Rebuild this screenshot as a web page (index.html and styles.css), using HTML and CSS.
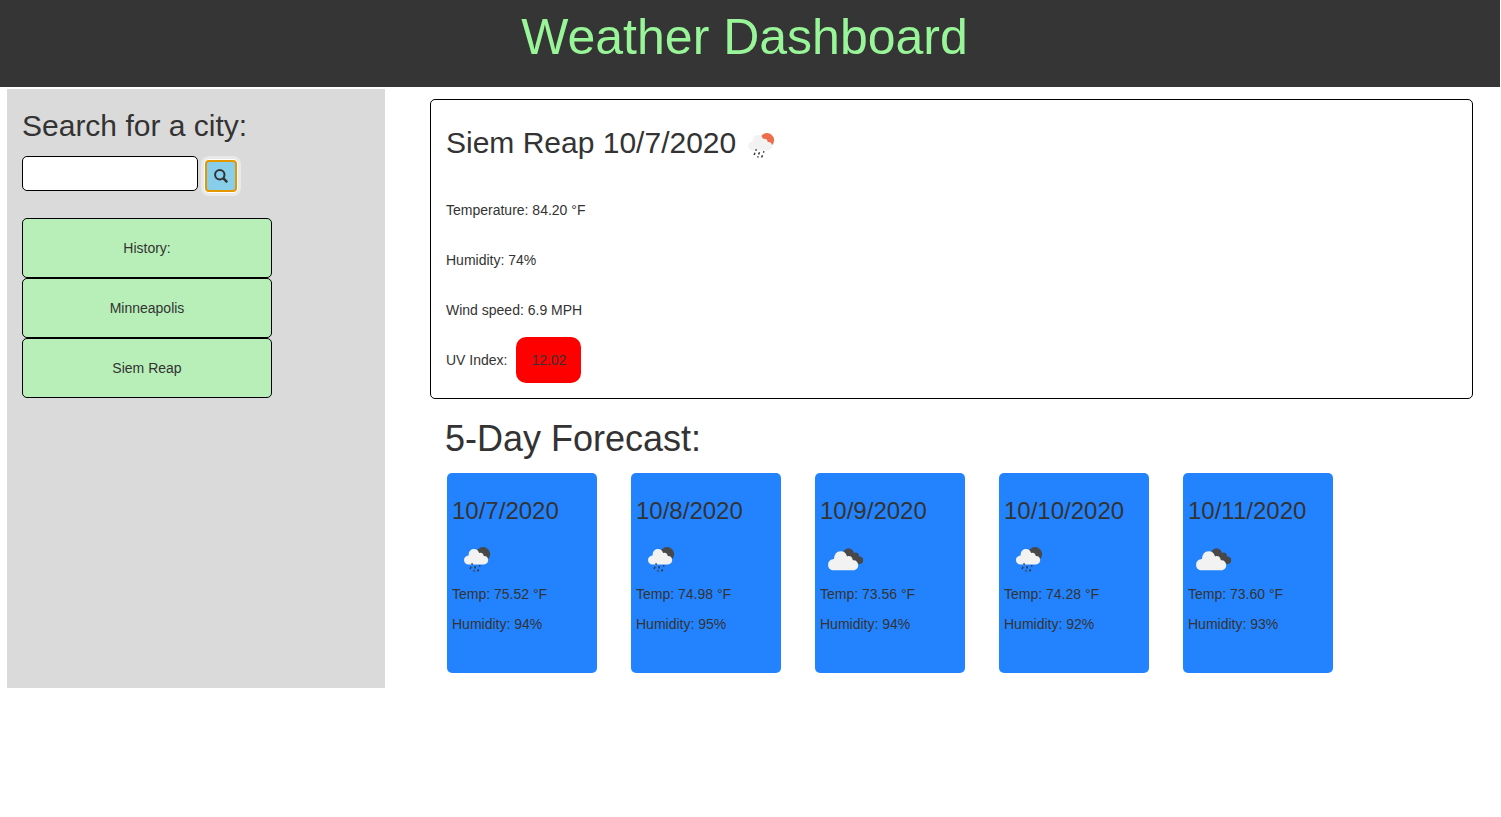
FILE: index.html
```html
<!DOCTYPE html>
<html lang="en">
<head>
<meta charset="utf-8">
<title>Weather Dashboard</title>
<link rel="stylesheet" href="styles.css">
</head>
<body>
<svg class="sprite" width="0" height="0" aria-hidden="true">
  <defs>
    <g id="puff">
      <path fill="#f2f2f2" d="M4.700 17.400C1.900 17.400 0 15.500 0 12.900 0 10.400 1.800 8.600 4.600 8.400 4.600 4.800 6.700 2.100 10 2.100c2.600 0 4.400 1.400 5.100 4 2.300-.8 4.400.500 4.700 3 2.500-.2 4.400 1.500 4.400 4 0 2.600-1.800 4.300-4.500 4.300z"/>
      <path fill="none" stroke="#383838" stroke-width="1.500" d="M8.300 16.300l-.4 1.500M7 19.800l-.9 2.200M11.500 19.300l-.9 2.200M16 18.200l-.6 1.400M10.200 23.300l-.5 1.300M14.500 22.300l-.9 2.300"/>
    </g>
    <symbol id="rain-day" viewBox="0 0 27 27">
      <circle cx="19" cy="7.200" r="7.100" fill="#ed6e4d"/>
      <use href="#puff"/>
    </symbol>
    <symbol id="rain-night" viewBox="0 0 27 27">
      <circle cx="19" cy="7.200" r="7.100" fill="#484848"/>
      <use href="#puff"/>
    </symbol>
    <symbol id="clouds" viewBox="0 0 36 24">
      <g fill="#484848"><circle cx="20.500" cy="5.500" r="5.300"/><circle cx="27.500" cy="8" r="3.500"/><circle cx="31.500" cy="12.200" r="3.700"/><path d="M18 8l10-3 6 9-5 2-7-1z"/></g>
      <path fill="#f2f2f2" d="M6 22.300C2.500 22.300.1 20.100.1 16.900c0-3.300 2.400-5.600 5.900-5.800C6.100 6.500 8.700 3.200 12.500 3.200c3.500 0 5.700 1.800 6.500 5.200 3-1 5.600.7 5.800 3.800 3.200-.2 5.400 1.900 5.400 5.100s-2.300 5-5.700 5z"/>
    </symbol>
  </defs>
</svg>
<header class="banner"><h1>Weather Dashboard</h1></header>
<main class="layout">
  <aside class="sidebar">
    <h2>Search for a city:</h2>
    <form class="search">
      <input class="search-input" type="text" aria-label="City">
      <button class="search-btn" type="button" aria-label="Search">
        <svg width="14" height="14" viewBox="0 0 14 14"><circle cx="5.800" cy="5.800" r="4.700" fill="none" stroke="#333" stroke-width="2"/><path d="M9.200 9.200l4 4" stroke="#333" stroke-width="2.500"/></svg>
      </button>
    </form>
    <ul class="history">
      <li>History:</li>
      <li>Minneapolis</li>
      <li>Siem Reap</li>
    </ul>
  </aside>
  <section class="content">
    <article class="current">
      <h2>Siem Reap 10/7/2020 <svg class="icon-now" width="27" height="27"><use href="#rain-day"/></svg></h2>
      <p>Temperature: 84.20 °F</p>
      <p>Humidity: 74%</p>
      <p>Wind speed: 6.9 MPH</p>
      <p>UV Index: <span class="uv">12.02</span></p>
    </article>
    <h1 class="forecast-title">5-Day Forecast:</h1>
    <div class="forecast">
      <article class="day"><h3>10/7/2020</h3><div class="icon"><svg width="27" height="27"><use href="#rain-night"/></svg></div><p>Temp: 75.52 °F</p><p>Humidity: 94%</p></article>
      <article class="day"><h3>10/8/2020</h3><div class="icon"><svg width="27" height="27"><use href="#rain-night"/></svg></div><p>Temp: 74.98 °F</p><p>Humidity: 95%</p></article>
      <article class="day"><h3>10/9/2020</h3><div class="icon wide"><svg width="36" height="24"><use href="#clouds"/></svg></div><p>Temp: 73.56 °F</p><p>Humidity: 94%</p></article>
      <article class="day"><h3>10/10/2020</h3><div class="icon"><svg width="27" height="27"><use href="#rain-night"/></svg></div><p>Temp: 74.28 °F</p><p>Humidity: 92%</p></article>
      <article class="day"><h3>10/11/2020</h3><div class="icon wide"><svg width="36" height="24"><use href="#clouds"/></svg></div><p>Temp: 73.60 °F</p><p>Humidity: 93%</p></article>
    </div>
  </section>
</main>
</body>
</html>
```

FILE: styles.css
```css
* { box-sizing: border-box; }
body {
  margin: 0;
  background: #fff;
  color: #333;
  font: 14px/20px "Liberation Sans", Arial, sans-serif;
}
h1, h2, h3, p, ul { margin: 0; padding: 0; font-weight: 400; }
.sprite { display: block; height: 0; }
.banner {
  height: 87px;
  margin-right: 1px;
  padding: 10px 11px 0 0;
  background: #353535;
  text-align: center;
}
.banner h1 { font-size: 50px; line-height: 55px; color: #98f598; }
.layout { display: flex; align-items: flex-start; padding: 2px 28px 0 7px; }
.sidebar { width: 378px; height: 599px; padding: 20px 15px; background: #dadada; }
.sidebar h2 { font-size: 30px; line-height: 33px; }
.search { display: flex; gap: 7px; height: 35px; margin-top: 14px; }
.search-input {
  width: 176px;
  height: 35px;
  border: 1px solid #000;
  border-radius: 5px;
  background: #fff;
}
.search-btn {
  display: flex;
  align-items: center;
  justify-content: center;
  width: 32px;
  height: 32px;
  margin-top: 4px;
  padding: 0;
  border: 2px solid #e59700;
  border-radius: 4px;
  background: #87ceeb;
  box-shadow: 0 0 0 1px #fff, 0 0 0 4px #e7e9ea;
}
.history { margin-top: 27px; list-style: none; }
.history li {
  width: 250px;
  height: 60px;
  border: 1px solid #000;
  border-radius: 5px;
  background: #b8efb8;
  line-height: 58px;
  text-align: center;
}
.content { flex: 1; margin-left: 45px; padding-top: 10px; }
.current {
  height: 300px;
  padding: 26px 15px 0;
  border: 1px solid #000;
  border-radius: 5px;
}
.current h2 { height: 33px; margin-bottom: 26px; font-size: 30px; line-height: 33px; }
.icon-now { margin-left: 3px; vertical-align: -7px; }
.current p { height: 50px; line-height: 50px; }
.uv {
  display: inline-block;
  height: 46px;
  margin-left: 5px;
  padding: 0 15px;
  border-radius: 10px;
  background: #f00;
  line-height: 46px;
}
.forecast-title { margin: 20px 0 0 15px; font-size: 36px; line-height: 40px; }
.forecast { display: flex; gap: 34px; margin: 14px 0 0 17px; }
.day { width: 150px; height: 200px; padding: 25px 5px 0; border-radius: 5px; background: #2383ff; }
.day h3 { font-size: 24px; line-height: 26px; }
.icon { display: flex; align-items: flex-start; height: 50px; margin: 10px 0 0 12px; padding-top: 13px; }
.icon.wide { margin-left: 8px; padding-top: 14px; }
.day p { height: 30px; line-height: 20px; }
```
